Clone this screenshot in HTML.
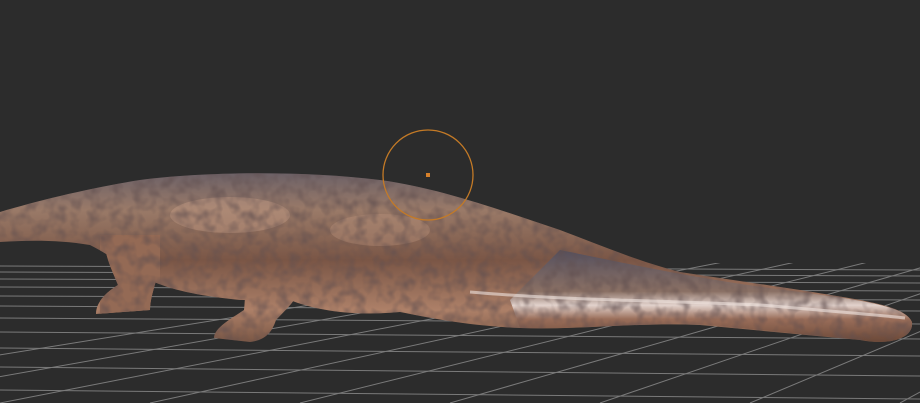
<!DOCTYPE html>
<html><head><style>
html,body{margin:0;padding:0;background:#2c2c2c;overflow:hidden}
svg{display:block}
</style></head><body>
<svg width="920" height="403" viewBox="0 0 920 403" xmlns="http://www.w3.org/2000/svg">
<defs>
<linearGradient id="body" x1="0" y1="0" x2="0" y2="1">
<stop offset="0" stop-color="#5c5866"/>
<stop offset="0.25" stop-color="#9a7a68"/>
<stop offset="0.5" stop-color="#7a5646"/>
<stop offset="0.75" stop-color="#ad8068"/>
<stop offset="1" stop-color="#5e4032"/>
</linearGradient>
<linearGradient id="snout" x1="0" y1="0" x2="0" y2="1">
<stop offset="0" stop-color="#55505e"/>
<stop offset="0.45" stop-color="#8a7064"/>
<stop offset="0.6" stop-color="#e2d2cc"/>
<stop offset="0.75" stop-color="#9a6e5a"/>
<stop offset="1" stop-color="#6a4838"/>
</linearGradient>
<clipPath id="floor"><rect x="0" y="263" width="920" height="140"/></clipPath>
<clipPath id="croc">
<path d="M0 212 C40 200 90 188 140 180 C200 172 300 170 380 180 C440 188 500 210 560 230 C600 245 640 262 680 272 L800 290 C860 300 905 305 912 322 C914 338 890 346 860 340 L700 325 C640 322 580 330 520 328 C470 326 430 318 400 312 C360 316 320 312 290 300 L240 300 C200 296 170 290 150 280 C130 270 110 255 90 245 C60 240 30 240 0 242 Z"/>
<path d="M105 240 C130 232 150 240 160 260 C158 280 150 295 150 310 L96 314 C96 300 110 290 118 285 C112 270 104 255 105 240 Z"/>
<path d="M250 260 C280 250 300 262 300 285 C298 300 285 310 276 320 C272 332 266 340 250 342 L214 338 C214 328 232 318 244 310 C246 292 244 276 250 260 Z"/>
</clipPath>
<filter id="tex" x="0" y="0" width="100%" height="100%">
<feTurbulence type="fractalNoise" baseFrequency="0.09" numOctaves="2" seed="3"/>
<feColorMatrix values="0 0 0 0 0.12  0 0 0 0 0.08  0 0 0 0 0.08  0 0 0 -2 1.2"/>
</filter>
</defs>
<g stroke="#7a7a7a" stroke-width="1" fill="none" clip-path="url(#floor)">
<path d="M0 266 L920 270"/><path d="M0 272 L920 276"/><path d="M0 279 L920 283"/>
<path d="M0 287 L920 291"/><path d="M0 296 L920 300"/><path d="M0 306 L920 311"/>
<path d="M0 318 L920 324"/><path d="M0 332 L920 339"/><path d="M0 348 L920 356"/>
<path d="M0 367 L920 376"/><path d="M0 390 L920 399"/>
<path d="M1400 130 L-300 403"/><path d="M1400 130 L-150 403"/><path d="M1400 130 L0 403"/>
<path d="M1400 130 L150 403"/><path d="M1400 130 L300 403"/><path d="M1400 130 L450 403"/>
<path d="M1400 130 L600 403"/><path d="M1400 130 L750 403"/><path d="M1400 130 L900 403"/>
<path d="M1400 130 L1050 403"/>
</g>
<g clip-path="url(#croc)">
<rect x="0" y="160" width="920" height="200" fill="url(#body)"/>
<path d="M560 250 C620 262 700 280 800 292 C860 300 905 306 912 322 C914 338 892 346 862 340 L700 324 C640 322 580 330 520 328 L510 300 Z" fill="url(#snout)"/>
<rect x="100" y="235" width="60" height="80" fill="#946a55"/>
<ellipse cx="230" cy="215" rx="60" ry="18" fill="#c9a08a" opacity="0.4"/>
<ellipse cx="380" cy="230" rx="50" ry="16" fill="#c09880" opacity="0.35"/>
<rect x="0" y="160" width="920" height="200" filter="url(#tex)" opacity="0.7"/>
<path d="M470 292 C560 300 650 300 760 305 C840 312 880 315 905 318" stroke="#f0e4e0" stroke-width="3" fill="none" opacity="0.6"/>
</g>
<circle cx="428" cy="175" r="45" fill="none" stroke="#c47a26" stroke-width="1.3"/>
<rect x="426" y="173" width="4" height="4" fill="#d6802a"/>
</svg>
</body></html>
